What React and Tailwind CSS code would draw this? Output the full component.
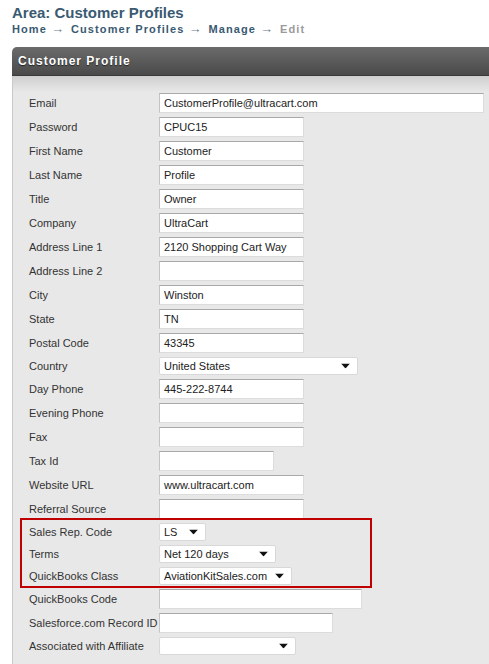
import React from 'react';

const font = { fontFamily: '"Liberation Sans", Arial, sans-serif' };

const Arrow = () => (
    <svg width="9" height="5" viewBox="0 0 9 5" className="absolute right-[7px] top-1/2 -translate-y-1/2">
        <polygon points="0,0 9,0 4.5,5" fill="#111" />
    </svg>
);

const TextField = ({ value = '', width }) => (
    <div
        className={`h-[20px] ${width} bg-white border border-[#dcdcdc] border-t-[#a9a9a9] border-l-[#c4c4c4] flex items-center pl-[4px] text-[11px] text-[#222] overflow-hidden whitespace-nowrap`}
    >
        {value}
    </div>
);

const SelectField = ({ value = '', width }) => (
    <div
        className={`relative h-[18px] ${width} bg-white border border-[#d8d8d8] rounded-[2px] flex items-center pl-[4px] text-[11px] text-[#222] whitespace-nowrap`}
    >
        {value}
        <Arrow />
    </div>
);

const Row = ({ label, children }) => (
    <div className="grid grid-cols-[130px_1fr] items-center">
        <span className="text-[11px] text-[#333] whitespace-nowrap">{label}</span>
        <div>{children}</div>
    </div>
);

const Sep = () => <span className="text-[#6a7f90] font-normal text-[13px] tracking-normal ml-[4px] mr-[7px]">→</span>;

const App = () => {
    return (
        <div className="bg-white min-h-[664px] overflow-hidden" style={font}>
            {/* Page heading + breadcrumb */}
            <div className="pl-[12px] pt-[4px]">
                <h1 className="text-[15px] font-bold text-[#3a5a72] leading-[18px]">Area: Customer Profiles</h1>
                <div className="text-[11px] font-bold tracking-[1.1px] leading-[14px] text-[#3a5a72]">
                    Home<Sep />Customer Profiles<Sep />Manage<Sep /><span className="text-[#9a9a9a]">Edit</span>
                </div>
            </div>

            {/* Panel */}
            <div className="ml-[12px] mt-[11px]">
                <div className="h-[29px] rounded-tl-[5px] bg-gradient-to-b from-[#6b6b6b] to-[#4a4a4a] border-b border-[#3a3a3a] flex items-center pl-[6px]">
                    <span
                        className="text-white text-[12px] font-bold tracking-[1px]"
                        style={{ textShadow: '0 1px 1px rgba(0,0,0,0.6)' }}
                    >
                        Customer Profile
                    </span>
                </div>
                <div className="relative bg-[#e8e8e8] border-l border-[#c9c9c9] pl-[16px] pt-[17px] pb-[12px]">
                    <div className="absolute left-0 right-0 top-0 h-[16px] bg-gradient-to-b from-[#cfcfcf] to-[#e8e8e8]" />
                    <div className="relative flex flex-col gap-[4px]">
                        <Row label="Email"><TextField value="CustomerProfile@ultracart.com" width="w-[325px]" /></Row>
                        <Row label="Password"><TextField value="CPUC15" width="w-[145px]" /></Row>
                        <Row label="First Name"><TextField value="Customer" width="w-[145px]" /></Row>
                        <Row label="Last Name"><TextField value="Profile" width="w-[145px]" /></Row>
                        <Row label="Title"><TextField value="Owner" width="w-[145px]" /></Row>
                        <Row label="Company"><TextField value="UltraCart" width="w-[145px]" /></Row>
                        <Row label="Address Line 1"><TextField value="2120 Shopping Cart Way" width="w-[145px]" /></Row>
                        <Row label="Address Line 2"><TextField width="w-[145px]" /></Row>
                        <Row label="City"><TextField value="Winston" width="w-[145px]" /></Row>
                        <Row label="State"><TextField value="TN" width="w-[145px]" /></Row>
                        <Row label="Postal Code"><TextField value="43345" width="w-[145px]" /></Row>
                        <Row label="Country"><SelectField value="United States" width="w-[199px]" /></Row>
                        <Row label="Day Phone"><TextField value="445-222-8744" width="w-[145px]" /></Row>
                        <Row label="Evening Phone"><TextField width="w-[145px]" /></Row>
                        <Row label="Fax"><TextField width="w-[145px]" /></Row>
                        <Row label="Tax Id"><TextField width="w-[115px]" /></Row>
                        <Row label="Website URL"><TextField value="www.ultracart.com" width="w-[145px]" /></Row>
                        <Row label="Referral Source"><TextField width="w-[145px]" /></Row>

                        {/* highlighted accounting fields */}
                        <div className="-ml-[9px] -mt-[5px] -mb-[3px] w-[352px] border-2 border-[#c00000] pl-[7px] pt-[3px] pb-[1px] flex flex-col gap-[4px]">
                            <Row label="Sales Rep. Code"><SelectField value="LS" width="w-[47px]" /></Row>
                            <Row label="Terms"><SelectField value="Net 120 days" width="w-[117px]" /></Row>
                            <Row label="QuickBooks Class"><SelectField value="AviationKitSales.com" width="w-[133px]" /></Row>
                        </div>

                        <Row label="QuickBooks Code"><TextField width="w-[203px]" /></Row>
                        <Row label="Salesforce.com Record ID"><TextField width="w-[174px]" /></Row>
                        <Row label="Associated with Affiliate"><SelectField width="w-[137px]" /></Row>
                    </div>
                </div>
            </div>
        </div>
    );
};

export default App;
